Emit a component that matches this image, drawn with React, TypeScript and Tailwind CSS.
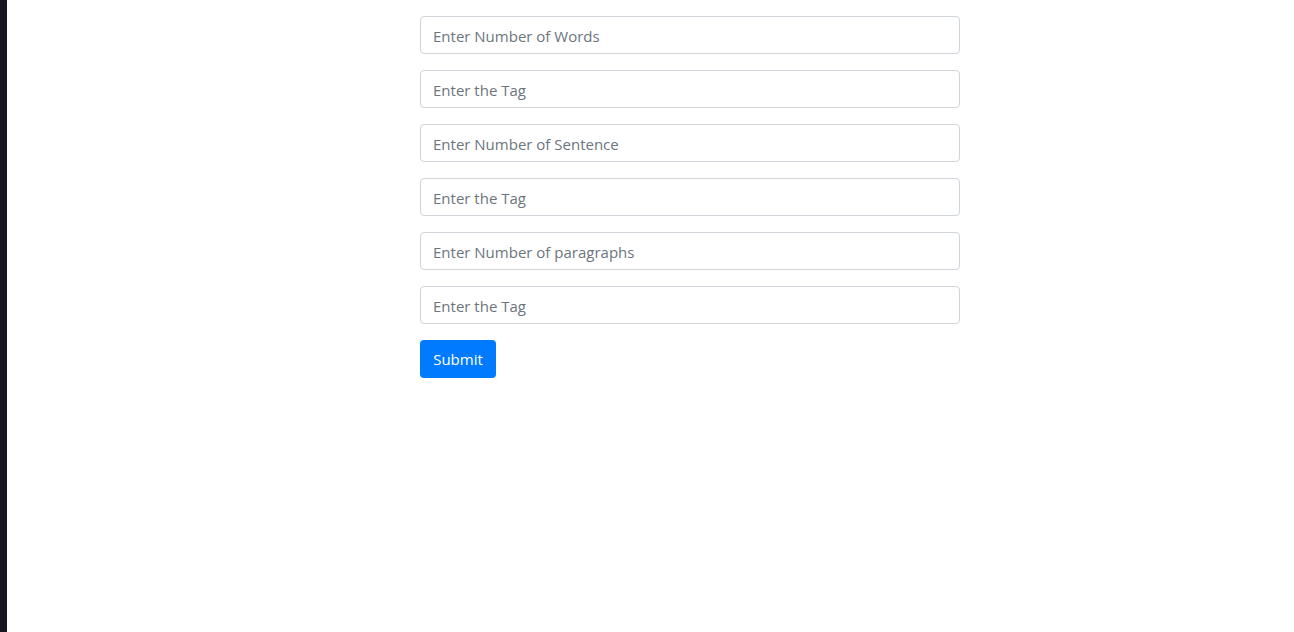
import React from 'react'

const fields = [
  'Enter Number of Words',
  'Enter the Tag',
  'Enter Number of Sentence',
  'Enter the Tag',
  'Enter Number of paragraphs',
  'Enter the Tag',
]

const App = () => {
  return (
    <div className="flex w-full h-[632px] bg-white" style={{ fontFamily: '"Open Sans", "Noto Sans", sans-serif' }}>
      <div className="w-[7px] h-full bg-[#17161e]" />
      <div className="flex-1 pl-[413px] pt-4">
        <form className="flex flex-col gap-4 w-[540px]">
          {fields.map((f, i) => (
            <input
              key={i}
              type="text"
              placeholder={f}
              className="w-full h-[38px] px-3 pt-[2px] border border-[#ced4da] rounded text-[15px] text-[#495057] placeholder:text-[#6c757d] outline-none"
            />
          ))}
          <div>
            <button type="button" className="w-[76px] h-[38px] pt-[1px] bg-[#007bff] text-white text-[15px] rounded">
              Submit
            </button>
          </div>
        </form>
      </div>
    </div>
  )
}

export default App
